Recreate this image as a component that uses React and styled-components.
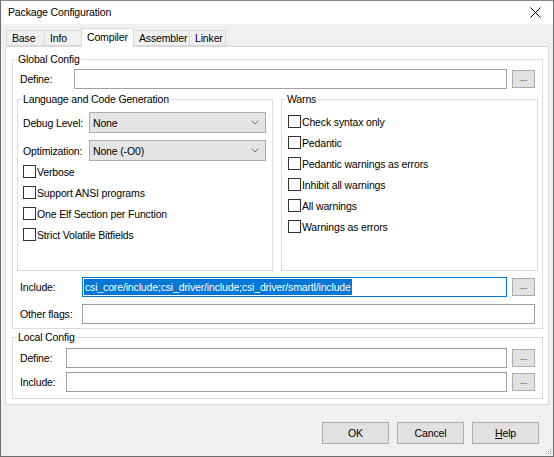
import React from "react";
import styled, { createGlobalStyle } from "styled-components";

const GlobalStyle = createGlobalStyle`
    html, body {
        margin: 0;
        padding: 0;
        background: #fff;
    }
    body {
        font-family: "Liberation Sans", Arial, sans-serif;
        font-size: 10.5px;
        letter-spacing: -0.15px;
        color: #000;
    }
    * {
        box-sizing: border-box;
    }
`;

const tabs = [
    { label: "Base", w: 39 },
    { label: "Info", w: 38 },
    { label: "Compiler", w: 53 },
    { label: "Assembler", w: 57 },
    { label: "Linker", w: 37 },
];
const langChecks = [
    "Verbose",
    "Support ANSI programs",
    "One Elf Section per Function",
    "Strict Volatile Bitfields",
];
const warnChecks = [
    "Check syntax only",
    "Pedantic",
    "Pedantic warnings as errors",
    "Inhibit all warnings",
    "All warnings",
    "Warnings as errors",
];

const Chevron = () => (
    <svg width="8" height="5" viewBox="0 0 8 5">
        <path d="M0.5 0.5 L4 4 L7.5 0.5" fill="none" stroke="#707070" strokeWidth="1" />
    </svg>
);

const CloseIcon = () => (
    <svg width="11" height="11" viewBox="0 0 11 11">
        <path d="M0.5 0.5 L10.5 10.5 M10.5 0.5 L0.5 10.5" stroke="#000" strokeWidth="1" />
    </svg>
);

const Grip = () => (
    <svg width="8" height="8" viewBox="0 0 8 8">
        <rect x="6" y="2" width="1" height="1" fill="#a0a0a0" />
        <rect x="4" y="4" width="1" height="1" fill="#a0a0a0" />
        <rect x="6" y="4" width="1" height="1" fill="#a0a0a0" />
        <rect x="2" y="6" width="1" height="1" fill="#a0a0a0" />
        <rect x="4" y="6" width="1" height="1" fill="#a0a0a0" />
        <rect x="6" y="6" width="1" height="1" fill="#a0a0a0" />
    </svg>
);

const Check = ({ label }) => (
    <CheckRow>
        <Box />
        <span>{label}</span>
    </CheckRow>
);

const App = () => {
    return (
        <>
            <GlobalStyle />
            <Window>
                <TitleBar>
                    <span>Package Configuration</span>
                    <CloseBtn>
                        <CloseIcon />
                    </CloseBtn>
                </TitleBar>
                <Body>
                    <TabStrip>
                        {tabs.map((t) => (
                            <Tab key={t.label} $w={t.w} $active={t.label === "Compiler"}>
                                {t.label}
                            </Tab>
                        ))}
                    </TabStrip>
                    <Panel>
                        <Group $mt={5}>
                            <Legend>Global Config</Legend>
                            <GroupBody $pt={3} $pb={4} $pl={4} $pr={4}>
                                <FieldRow>
                                    <Label $w={54}>Define:</Label>
                                    <TextBox />
                                    <DotsButton>...</DotsButton>
                                </FieldRow>
                                <Columns>
                                    <Group $h={179}>
                                        <Legend>Language and Code Generation</Legend>
                                        <GroupBody $pt={6} $pl={5} $pr={6}>
                                            <SelectRow>
                                                <Label $w={66}>Debug Level:</Label>
                                                <Select>
                                                    <span>None</span>
                                                    <Chevron />
                                                </Select>
                                            </SelectRow>
                                            <SelectRow $mt={7}>
                                                <Label $w={66}>Optimization:</Label>
                                                <Select>
                                                    <span>None (-O0)</span>
                                                    <Chevron />
                                                </Select>
                                            </SelectRow>
                                            {langChecks.map((c) => (
                                                <Check key={c} label={c} />
                                            ))}
                                        </GroupBody>
                                    </Group>
                                    <Group $h={179}>
                                        <Legend>Warns</Legend>
                                        <GroupBody $pt={5} $pl={6} $pr={6}>
                                            {warnChecks.map((c) => (
                                                <Check key={c} label={c} />
                                            ))}
                                        </GroupBody>
                                    </Group>
                                </Columns>
                                <FieldRow $mt={6}>
                                    <Label $w={62}>Include:</Label>
                                    <TextBox $focused>
                                        <Selected>
                                            csi_core/include;csi_driver/include;csi_driver/smartl/include
                                        </Selected>
                                    </TextBox>
                                    <DotsButton>...</DotsButton>
                                </FieldRow>
                                <FieldRow $mt={7}>
                                    <Label $w={62}>Other flags:</Label>
                                    <TextBox />
                                </FieldRow>
                            </GroupBody>
                        </Group>
                        <Group $mt={1}>
                            <Legend>Local Config</Legend>
                            <GroupBody $pt={4} $pb={6} $pl={4} $pr={4}>
                                <FieldRow>
                                    <Label $w={46}>Define:</Label>
                                    <TextBox />
                                    <DotsButton>...</DotsButton>
                                </FieldRow>
                                <FieldRow $mt={4}>
                                    <Label $w={46}>Include:</Label>
                                    <TextBox />
                                    <DotsButton>...</DotsButton>
                                </FieldRow>
                            </GroupBody>
                        </Group>
                    </Panel>
                    <Footer>
                        <Button>OK</Button>
                        <Button>Cancel</Button>
                        <Button>
                            <u>H</u>elp
                        </Button>
                    </Footer>
                    <GripCorner>
                        <Grip />
                    </GripCorner>
                </Body>
            </Window>
        </>
    );
};

export default App;

const Window = styled.div`
    position: relative;
    width: 554px;
    height: 457px;
    display: flex;
    flex-direction: column;
    border: 1px solid #6d6d6d;
    border-top-color: #8a8a8a;
    background: #f0f0f0;
`;

const TitleBar = styled.div`
    height: 23px;
    flex: none;
    background: #fff;
    display: flex;
    align-items: center;
    justify-content: space-between;
    padding: 0 7px 1px 7px;
`;

const CloseBtn = styled.div`
    width: 11px;
    height: 11px;
    display: flex;
    margin-right: 5px;
`;

const Body = styled.div`
    flex: 1;
    display: flex;
    flex-direction: column;
    padding: 4px 4px 0;
`;

const TabStrip = styled.div`
    display: flex;
    align-items: flex-end;
    height: 18px;
    padding-left: 1px;
`;

const Tab = styled.div`
    position: relative;
    z-index: ${(p) => (p.$active ? 1 : 0)};
    width: ${(p) => p.$w}px;
    height: ${(p) => (p.$active ? 19 : 16)}px;
    margin-bottom: ${(p) => (p.$active ? -1 : 0)}px;
    margin-left: -1px;
    padding: ${(p) => (p.$active ? 2 : 0)}px 0 0 5px;
    display: flex;
    align-items: ${(p) => (p.$active ? "flex-start" : "center")};
    border: 1px solid #d9d9d9;
    border-bottom: ${(p) => (p.$active ? "none" : "1px solid #d9d9d9")};
    background: ${(p) => (p.$active ? "#fff" : "#f0f0f0")};
    line-height: 13px;
    white-space: nowrap;
    &:first-child {
        margin-left: 0;
    }
`;

const Panel = styled.div`
    height: 359px;
    background: #fff;
    border: 1px solid #d9d9d9;
    padding: 0 5px 0 6px;
    display: flex;
    flex-direction: column;
`;

const Group = styled.fieldset`
    margin: ${(p) => p.$mt || 0}px 0 0 0;
    padding: 0;
    border: 1px solid #dcdcdc;
    min-width: 0;
    height: ${(p) => (p.$h ? `${p.$h}px` : "auto")};
`;

const Legend = styled.legend`
    margin-left: 4px;
    padding: 0 1px;
    line-height: 14px;
    height: 14px;
`;

const GroupBody = styled.div`
    display: flex;
    flex-direction: column;
    padding: ${(p) => p.$pt || 0}px ${(p) => p.$pr || 0}px
        ${(p) => p.$pb || 0}px ${(p) => p.$pl || 0}px;
`;

const FieldRow = styled.div`
    display: flex;
    align-items: center;
    height: 20px;
    margin-top: ${(p) => p.$mt || 0}px;
    padding: 0 3px;
`;

const Label = styled.span`
    flex: none;
    width: ${(p) => p.$w}px;
    white-space: nowrap;
    line-height: 14px;
`;

const TextBox = styled.div`
    flex: 1;
    min-width: 0;
    height: 20px;
    border: 1px solid ${(p) => (p.$focused ? "#0078d7" : "#a0a0a0")};
    background: #fff;
    display: flex;
    align-items: center;
    padding-left: 1px;
    overflow: hidden;
    white-space: nowrap;
`;

const Selected = styled.span`
    background: #0078d7;
    color: #fff;
    line-height: 16px;
    padding: 0 1px;
`;

const DotsButton = styled.div`
    flex: none;
    width: 23px;
    height: 18px;
    margin-left: 5px;
    border: 1px solid #adadad;
    background: #e1e1e1;
    display: flex;
    align-items: center;
    justify-content: center;
    font-size: 9px;
    line-height: 9px;
    padding-bottom: 2px;
    color: #222;
`;

const Columns = styled.div`
    display: grid;
    grid-template-columns: 256px 257px;
    gap: 8px;
    margin-top: 3px;
`;

const SelectRow = styled.div`
    display: flex;
    align-items: center;
    margin-top: ${(p) => p.$mt || 0}px;
`;

const Select = styled.div`
    flex: 1;
    height: 21px;
    border: 1px solid #acacac;
    background: #e5e5e5;
    display: flex;
    align-items: center;
    justify-content: space-between;
    padding: 0 6px 0 3px;
`;

const CheckRow = styled.div`
    height: 21px;
    display: flex;
    align-items: center;
    gap: 1px;
    white-space: nowrap;
`;

const Box = styled.span`
    width: 13px;
    height: 13px;
    border: 1px solid #333;
    background: #fff;
    flex: none;
`;

const Footer = styled.div`
    display: flex;
    justify-content: flex-end;
    gap: 8px;
    margin-top: 17px;
    padding-right: 10px;
`;

const Button = styled.div`
    width: 67px;
    height: 22px;
    border: 1px solid #adadad;
    background: #e1e1e1;
    display: flex;
    align-items: center;
    justify-content: center;
`;

const GripCorner = styled.div`
    position: absolute;
    right: 1px;
    bottom: 1px;
    display: flex;
`;
